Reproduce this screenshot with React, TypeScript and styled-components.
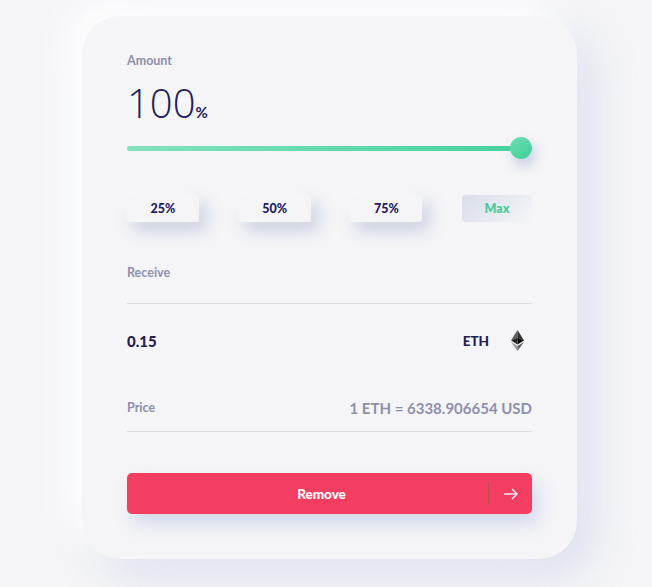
import React from "react";
import styled, { createGlobalStyle } from "styled-components";

const GlobalStyle = createGlobalStyle`
  html, body {
    margin: 0;
    padding: 0;
    background: #f5f5f8;
    overflow: hidden;
  }
  body {
    font-family: "Lato", "Open Sans", sans-serif;
  }
`;

const Page = styled.div`
  width: 652px;
  height: 587px;
  padding: 16px 0 0 82px;
  box-sizing: border-box;
  overflow: hidden;
`;

const Card = styled.div`
  width: 495px;
  height: 543px;
  box-sizing: border-box;
  padding: 38px 45px 0;
  border-radius: 38px;
  background: #f5f5f8;
  box-shadow: -16px -16px 36px rgba(255, 255, 255, 0.9), 16px 16px 40px rgba(208, 215, 232, 0.7);
`;

const Label = styled.div`
  font-size: 12.5px;
  line-height: 14px;
  font-weight: 700;
  color: #8e8fab;
`;

const Amount = styled.div`
  display: flex;
  align-items: baseline;
  margin-top: 9px;
  height: 55px;
  color: #21205f;
  font-family: "Open Sans", sans-serif;
  font-size: 40px;
  line-height: 52px;
  font-weight: 300;
`;

const Unit = styled.span`
  font-family: "Lato", sans-serif;
  font-size: 15px;
  font-weight: 700;
`;

const Slider = styled.div`
  position: relative;
  height: 5px;
  margin-top: 14px;
  border-radius: 3px;
  background: linear-gradient(90deg, #84e2bb, #42d29b);
`;

const Thumb = styled.div`
  position: absolute;
  right: 0;
  top: -9px;
  width: 22px;
  height: 22px;
  border-radius: 50%;
  background: linear-gradient(150deg, #72ddb3, #3bd097);
  box-shadow: 3px 7px 12px rgba(175, 186, 212, 0.65);
`;

const Presets = styled.div`
  display: flex;
  justify-content: space-between;
  margin-top: 44px;
`;

const Preset = styled.div<{ $active?: boolean }>`
  display: flex;
  align-items: center;
  justify-content: center;
  width: ${(p) => (p.$active ? "70px" : "72px")};
  height: 27px;
  border-radius: 3px;
  font-size: 12.5px;
  font-weight: 900;
  color: ${(p) => (p.$active ? "#42c996" : "#21205f")};
  background: ${(p) =>
    p.$active ? "linear-gradient(135deg, #d9deeb, #f5f5f8)" : "#f5f5f8"};
  box-shadow: ${(p) =>
    p.$active
      ? "none"
      : "-3px -3px 12px rgba(255, 255, 255, 0.6), 6px 8px 17px rgba(180, 190, 212, 0.75)"};
`;

const ReceiveRow = styled.div`
  margin-top: 44px;
  padding-bottom: 23px;
  border-bottom: 1px solid #dcdde3;
`;

const TokenRow = styled.div`
  display: flex;
  align-items: center;
  justify-content: space-between;
  height: 73px;
  color: #21204f;
  font-weight: 900;
`;

const Value = styled.div`
  font-size: 15px;
`;

const Token = styled.div`
  display: flex;
  align-items: center;
  gap: 22px;
  font-size: 13.5px;
  padding-right: 8px;
`;

const PriceRow = styled.div`
  display: flex;
  align-items: center;
  justify-content: space-between;
  height: 24px;
  margin-top: 19px;
  padding-bottom: 11px;
  border-bottom: 1px solid #dcdde3;
`;

const PriceText = styled.div`
  font-size: 15px;
  font-weight: 700;
  color: #8e8fab;
`;

const RemoveButton = styled.div`
  display: flex;
  align-items: center;
  height: 41px;
  margin-top: 41px;
  border-radius: 5px;
  background: #f33d61;
  color: #ffffff;
  box-shadow: 6px 10px 18px rgba(195, 205, 228, 0.7);
`;

const RemoveLabel = styled.div`
  flex: 1;
  text-align: center;
  font-size: 13.5px;
  font-weight: 900;
  padding-left: 28px;
`;

const Divider = styled.div`
  width: 1px;
  height: 23px;
  background: #bd4c4e;
`;

const ArrowBox = styled.div`
  display: flex;
  align-items: center;
  justify-content: center;
  width: 43px;
`;

const EthIcon = () => (
  <svg width="13" height="21" viewBox="0 0 13 21">
    <path d="M6.5 0 L0 10.5 L6.5 7.5 Z" fill="#5c5c5c" />
    <path d="M6.5 0 L13 10.5 L6.5 7.5 Z" fill="#303030" />
    <path d="M6.5 7.5 L0 10.5 L6.5 14.5 Z" fill="#262626" />
    <path d="M6.5 7.5 L13 10.5 L6.5 14.5 Z" fill="#0c0c0c" />
    <path d="M0 12 L6.5 21 L6.5 16 Z" fill="#999999" />
    <path d="M13 12 L6.5 21 L6.5 16 Z" fill="#5e5e5e" />
  </svg>
);

const ArrowIcon = () => (
  <svg width="14" height="12" viewBox="0 0 14 12" fill="none" stroke="#fff" strokeWidth="1.3">
    <path d="M0 6 H13" />
    <path d="M8 1 L13 6 L8 11" />
  </svg>
);

export default function App() {
  return (
    <Page>
      <GlobalStyle />
      <Card>
        <Label>Amount</Label>
        <Amount>
          100<Unit>%</Unit>
        </Amount>
        <Slider>
          <Thumb />
        </Slider>
        <Presets>
          <Preset>25%</Preset>
          <Preset>50%</Preset>
          <Preset>75%</Preset>
          <Preset $active>Max</Preset>
        </Presets>
        <ReceiveRow>
          <Label>Receive</Label>
        </ReceiveRow>
        <TokenRow>
          <Value>0.15</Value>
          <Token>
            ETH
            <EthIcon />
          </Token>
        </TokenRow>
        <PriceRow>
          <Label>Price</Label>
          <PriceText>1 ETH = 6338.906654 USD</PriceText>
        </PriceRow>
        <RemoveButton>
          <RemoveLabel>Remove</RemoveLabel>
          <Divider />
          <ArrowBox>
            <ArrowIcon />
          </ArrowBox>
        </RemoveButton>
      </Card>
    </Page>
  );
}
